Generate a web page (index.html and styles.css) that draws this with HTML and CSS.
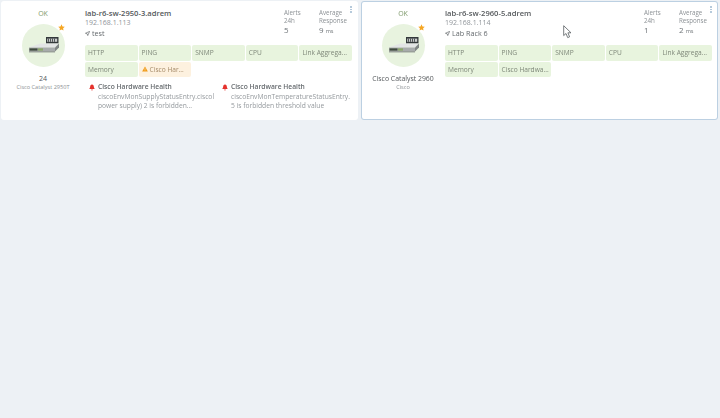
FILE: index.html
```html
<!DOCTYPE html>
<html lang="en">
<head>
<meta charset="utf-8">
<title>Devices</title>
<link rel="stylesheet" href="styles.css">
</head>
<body>
<svg class="sprites" width="0" height="0" aria-hidden="true">
  <defs>
    <symbol id="device" viewBox="0 0 44 44">
      <rect x="24" y="13" width="12.5" height="6.5" fill="#33383a"/>
      <rect x="25.2" y="14.6" width="10" height="3.2" fill="#c9cccc"/>
      <path d="M26.5 14.6v3.2M28.5 14.6v3.2M30.5 14.6v3.2M32.5 14.6v3.2" stroke="#33383a" stroke-width=".8"/>
      <path d="M7 23.5 L18 19.5 H37 L33 23.5Z" fill="#e3e5e5"/>
      <path d="M7 23.5 H33 V27.5 H7Z" fill="#a8acac"/>
      <path d="M33 23.5 L37 19.5 V23.5 L33 27.5Z" fill="#7f8484"/>
      <rect x="7.5" y="24.4" width="8" height="2.2" fill="#3f4a3d"/>
      <rect x="16" y="24.4" width="5" height="2.2" fill="#8aa868"/>
      <path d="M7 27.5 H33 V28.3 H7Z" fill="#6a6f6f"/>
    </symbol>
    <symbol id="star" viewBox="0 0 10 10">
      <path d="M5 .4 6.4 3.4 9.7 3.8 7.3 6 7.9 9.4 5 7.7 2.1 9.4 2.7 6 .3 3.8 3.6 3.4Z" fill="#f5a623"/>
    </symbol>
    <symbol id="pin" viewBox="0 0 8 8">
      <path d="M7.4.6 .7 3.6 3.5 4.5 4.4 7.3Z" fill="none" stroke="#4a4f52" stroke-width=".9"/>
    </symbol>
    <symbol id="bell" viewBox="0 0 8 9">
      <path d="M4 .4C5.7.4 6.4 1.8 6.4 3.3 6.4 5 7.5 5.7 7.5 6.6H.5C.5 5.7 1.6 5 1.6 3.3 1.6 1.8 2.3.4 4 .4ZM2.9 7.2H5.1C5.1 8 4.6 8.5 4 8.5S2.9 8 2.9 7.2Z" fill="#e5322d"/>
    </symbol>
    <symbol id="warn" viewBox="0 0 8 8">
      <path d="M4 .5 7.8 7.4H.2Z" fill="#f09a16"/>
      <path d="M4 3v2.2M4 5.8v.7" stroke="#fff" stroke-width=".7"/>
    </symbol>
  </defs>
</svg>

<main class="grid">
  <article class="card">
    <section class="side">
      <div class="status">OK</div>
      <div class="avatar">
        <svg class="device"><use href="#device"/></svg>
        <svg class="star"><use href="#star"/></svg>
      </div>
      <div class="model">24</div>
      <div class="vendor">Cisco Catalyst 2950T</div>
    </section>
    <section class="body">
      <header class="top">
        <div class="identity">
          <div class="name">lab-r6-sw-2950-3.adrem</div>
          <div class="ip">192.168.1.113</div>
          <div class="location"><svg class="pin"><use href="#pin"/></svg>test</div>
        </div>
        <div class="stat stat-alerts">
          <div class="stat-label">Alerts<br>24h</div>
          <div class="stat-value">5</div>
        </div>
        <div class="stat stat-response">
          <div class="stat-label">Average<br>Response</div>
          <div class="stat-value">9 <small>ms</small></div>
        </div>
        <div class="kebab"><i></i><i></i><i></i></div>
      </header>
      <div class="tiles">
        <div class="tile">HTTP</div>
        <div class="tile">PING</div>
        <div class="tile">SNMP</div>
        <div class="tile">CPU</div>
        <div class="tile">Link Aggrega...</div>
        <div class="tile">Memory</div>
        <div class="tile tile-warn"><svg class="warn"><use href="#warn"/></svg>Cisco Har...</div>
      </div>
      <div class="alerts">
        <div class="alert">
          <svg class="bell"><use href="#bell"/></svg>
          <div class="alert-text">
            <div class="alert-title">Cisco Hardware Health</div>
            <div class="alert-desc">ciscoEnvMonSupplyStatusEntry.ciscol<br>power supply) 2 is forbidden...</div>
          </div>
        </div>
        <div class="alert">
          <svg class="bell"><use href="#bell"/></svg>
          <div class="alert-text">
            <div class="alert-title">Cisco Hardware Health</div>
            <div class="alert-desc">ciscoEnvMonTemperatureStatusEntry.<br>5 is forbidden threshold value</div>
          </div>
        </div>
      </div>
    </section>
  </article>

  <article class="card card-active">
    <section class="side">
      <div class="status">OK</div>
      <div class="avatar">
        <svg class="device"><use href="#device"/></svg>
        <svg class="star"><use href="#star"/></svg>
      </div>
      <div class="model model-long">Cisco Catalyst 2960</div>
      <div class="vendor">Cisco</div>
    </section>
    <section class="body">
      <header class="top">
        <div class="identity">
          <div class="name">lab-r6-sw-2960-5.adrem</div>
          <div class="ip">192.168.1.114</div>
          <div class="location"><svg class="pin"><use href="#pin"/></svg>Lab Rack 6</div>
        </div>
        <div class="stat stat-alerts">
          <div class="stat-label">Alerts<br>24h</div>
          <div class="stat-value">1</div>
        </div>
        <div class="stat stat-response">
          <div class="stat-label">Average<br>Response</div>
          <div class="stat-value">2 <small>ms</small></div>
        </div>
        <div class="kebab"><i></i><i></i><i></i></div>
      </header>
      <div class="tiles">
        <div class="tile">HTTP</div>
        <div class="tile">PING</div>
        <div class="tile">SNMP</div>
        <div class="tile">CPU</div>
        <div class="tile">Link Aggrega...</div>
        <div class="tile">Memory</div>
        <div class="tile">Cisco Hardwa...</div>
      </div>
    </section>
  </article>
</main>

<svg class="cursor" viewBox="0 0 10 14" aria-hidden="true">
  <path d="M.7.7V10.6L3 8.5 4.7 12.6 6.6 11.8 4.9 7.8H8Z" fill="#fff" stroke="#555c60" stroke-width=".8"/>
</svg>
</body>
</html>
```
FILE: styles.css
```css
* { box-sizing: border-box; }

html, body { height: 100%; }

body {
  margin: 0;
  padding: 1px 2px 0 1px;
  background: #edf1f5;
  font-family: "Open Sans", "Liberation Sans", sans-serif;
  color: #50565a;
  overflow: hidden;
}

.sprites { position: absolute; }

.grid {
  display: grid;
  grid-template-columns: 357px 357px;
  gap: 3px;
  align-items: start;
  filter: blur(.3px);
}

.card {
  display: flex;
  height: 119px;
  background: #fff;
  border-radius: 3px;
}

.card-active {
  box-shadow: inset 0 0 0 1px #bcd0e2;
}

.side {
  width: 84px;
  flex: none;
  padding-top: 8px;
  display: flex;
  flex-direction: column;
  align-items: center;
}

.status {
  font-size: 7px;
  line-height: 9px;
  color: #7f9a6c;
}

.avatar {
  position: relative;
  width: 43px;
  height: 43px;
  margin: 6px 0 6.5px;
  border-radius: 50%;
  background: #e8f3df;
}

.device { display: block; width: 44px; height: 44px; }

.star {
  position: absolute;
  top: 0;
  right: 0;
  width: 7px;
  height: 7px;
}

.model {
  font-size: 7px;
  line-height: 9px;
  font-weight: 500;
  color: #55595c;
}

.model-long { font-size: 6.9px; white-space: nowrap; }

.vendor {
  font-size: 5.6px;
  line-height: 8px;
  color: #8c9195;
  white-space: nowrap;
}

.body {
  flex: 1;
  min-width: 0;
  display: flex;
  flex-direction: column;
}

.top {
  display: flex;
  height: 44px;
  padding-top: 7px;
}

.identity { width: 199px; flex: none; }

.name {
  font-size: 7.6px;
  line-height: 10px;
  font-weight: 600;
  color: #55595c;
}

.ip {
  font-size: 7px;
  line-height: 10px;
  color: #90959a;
}

.location {
  display: flex;
  align-items: center;
  gap: 2px;
  font-size: 7.2px;
  line-height: 10px;
  color: #64696d;
}

.pin { width: 5px; height: 5px; flex: none; }

.stat { margin-top: 1px; }
.stat-alerts { width: 35px; flex: none; }
.stat-response { width: 31px; flex: none; }

.stat-label {
  font-size: 6.2px;
  line-height: 7.5px;
  color: #8c9195;
  white-space: nowrap;
}

.stat-value {
  margin-top: 1px;
  font-size: 8px;
  line-height: 10px;
  color: #6e7377;
}

.stat-value small { font-size: 5.6px; }

.kebab {
  display: flex;
  flex-direction: column;
  gap: 1px;
  margin-left: auto;
  margin-right: 7px;
  margin-top: -2px;
}

.kebab i {
  display: block;
  width: 1.5px;
  height: 1.5px;
  background: #a9c0d5;
  border-radius: 50%;
}

.tiles {
  display: grid;
  grid-template-columns: repeat(5, 52.6px);
  grid-auto-rows: 15.5px;
  gap: 1px;
}

.tile {
  display: flex;
  align-items: center;
  gap: 2px;
  padding-left: 3px;
  background: #e8f4de;
  border-radius: 2px;
  font-size: 6.6px;
  color: #7e8779;
  white-space: nowrap;
  overflow: hidden;
}

.tile-warn {
  background: #fdf1df;
  color: #a58a68;
}

.warn { width: 6px; height: 6px; flex: none; }

.alerts {
  display: flex;
  gap: 3px;
  margin-top: 4.5px;
}

.alert {
  display: flex;
  gap: 3px;
  width: 130px;
  flex: none;
  padding-left: 4px;
}

.alert-text { min-width: 0; flex: 1; }

.bell { width: 6px; height: 7px; flex: none; margin-top: 2px; }

.alert-title {
  font-size: 6.7px;
  line-height: 10px;
  font-weight: 600;
  color: #64696d;
  white-space: nowrap;
}

.alert-desc {
  font-size: 6.7px;
  line-height: 9.5px;
  color: #94999d;
  white-space: nowrap;
}

.cursor {
  position: absolute;
  left: 563px;
  top: 25px;
  width: 10px;
  height: 14px;
}
```
